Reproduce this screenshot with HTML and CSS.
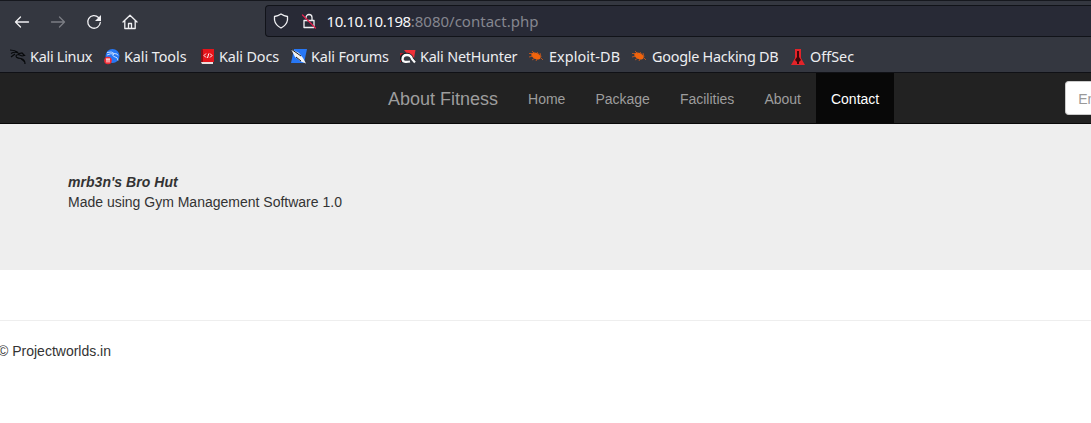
FILE: index.html
```html
<!DOCTYPE html>
<html lang="en">
<head>
<meta charset="utf-8">
<title>Contact</title>
<link rel="stylesheet" href="styles.css">
</head>
<body>
<header class="browser">
  <div class="toolbar">
    <div class="controls">
      <svg class="control" viewBox="0 0 16 16"><path d="M14.500 8H1.500M6.500 3 1.500 8l5 5"/></svg>
      <svg class="control control-off" viewBox="0 0 16 16"><path d="M1.500 8h13M9.500 3l5 5-5 5"/></svg>
      <svg class="control" viewBox="0 0 16 16"><path d="M12.500 3.500A6.300 6.300 0 1 0 14.300 8.500"/><path class="solid" d="M15 1v6H9z"/></svg>
      <svg class="control" viewBox="0 0 16 16"><path d="M1 8 8 1.300 15 8M2.800 6.500V14.500H13.200V6.500M6.500 14V9.500H9.500V14"/></svg>
    </div>
    <div class="address">
      <svg class="control" viewBox="0 0 16 16"><path d="M8 1Q11 3 14.500 3.500V7q-.8 5-6.500 8Q2.300 12 1.500 7V3.500Q5 3 8 1z"/></svg>
      <svg class="control" viewBox="0 0 16 16"><path d="M3 7.500h10v7H3zM5 5V4.500a3 3 0 0 1 6 0V7"/><path class="slash" d="M1.500 2 14.500 15"/></svg>
      <span class="url"><b>10.10.10.198</b>:8080/contact.php</span>
    </div>
  </div>
  <nav class="bookmarks">
    <a class="mark linux"><svg viewBox="0 0 16 16"><path d="M0 1Q5 1 8 3.500M1 4.500Q5 2 9 4.500L12 4l2.500 2.500L12 7 8.500 5.500Q5 6 6.500 8.200 8 9.500 11 9.500q4 1 4 5.500M1 8l4-3M11 10q2 1 3 2.500" fill="none" stroke="#07090b" stroke-width="1.200"/></svg><span>Kali Linux</span></a>
    <a class="mark tools"><svg viewBox="0 0 16 16"><circle cx="8.500" cy="7" r="7" fill="#2777f5"/><path d="M3 3.500Q8 2 10 4.500l3 .5 1 1.500M3 6q4-2 7-1-3 1 0 2.500 4 .5 4 4" fill="none" stroke="#c5dcff" stroke-width="1"/><circle cx="4" cy="11.500" r="3.800" fill="#f02b35"/><path d="M2 10h4M3 10v3.500M5 10v3.500" stroke="#fff"/></svg><span>Kali Tools</span></a>
    <a class="mark docs"><svg viewBox="0 0 16 16"><path d="M3 0h12v13H3z" fill="#e5141b"/><path d="M2 1l2-1v13H2z" fill="#8d0e14"/><path d="M2 13h12v2H3z" fill="#eadede"/><path d="M7 4.500 5 6.500l2 2M11 4.500l2 2-2 2M9.800 4.500l-1.300 4.500" fill="none" stroke="#fff"/></svg><span>Kali Docs</span></a>
    <a class="mark forums"><svg viewBox="0 0 16 16"><path d="M3 0h13l-3 14H0z" fill="#2777f5"/><path d="M0 0 8 4l4 5 3 5.500-5-2L4 8z" fill="#f4f4f4"/><path d="M0 0l10 7M5 8l5 4" stroke="#171b22"/></svg><span>Kali Forums</span></a>
    <a class="mark hunter"><svg viewBox="0 0 16 16"><path d="M4 1h11.500l-2 11z" fill="#f03038"/><path d="M0 4h4v9H0z" fill="#b91d2b"/><path d="M3 13Q-1 7 5 5.500q5-1 7 3.500l3 4.500" fill="none" stroke="#15191e" stroke-width="3"/><path d="M10 12.500Q3 14 2.500 10.500 2.500 6 7 6q4 0 5 4l3 3.500" fill="none" stroke="#fafafa" stroke-width="2.300"/></svg><span>Kali NetHunter</span></a>
    <a class="mark exploit"><svg viewBox="0 0 16 16"><ellipse cx="8" cy="7" rx="5" ry="3" transform="rotate(24 8 7)" fill="#f2640c"/><path d="M4 2l3 3M1 4.500h4M1 8l4-1M4 11l3-2M8 12l1-2M9 3l2 3M12 4l1 4M13 9l2 2" stroke="#d75b17" stroke-width=".8"/></svg><span>Exploit-DB</span></a>
    <a class="mark google"><svg viewBox="0 0 16 16"><ellipse cx="8" cy="7" rx="5" ry="3" transform="rotate(24 8 7)" fill="#f2640c"/><path d="M4 2l3 3M1 4.500h4M1 8l4-1M4 11l3-2M8 12l1-2M9 3l2 3M12 4l1 4M13 9l2 2" stroke="#d75b17" stroke-width=".8"/></svg><span>Google Hacking DB</span></a>
    <a class="mark offsec"><svg viewBox="0 0 16 16"><path d="M5 0h6v9l4 7H1l4-7z" fill="#e32329"/><path d="M7 2h2v6l2 3-2 2v2H7v-2l-2-2 2-3z" fill="#3d0709"/></svg><span>OffSec</span></a>
  </nav>
</header>
<nav class="site-nav">
  <a class="brand">About Fitness</a>
  <a>Home</a><a>Package</a><a>Facilities</a><a>About</a><a class="active">Contact</a>
  <div class="search">En</div>
</nav>
<main class="hero"><strong>mrb3n's Bro Hut</strong><span>Made using Gym Management Software 1.0</span></main>
<footer class="footer">© Projectworlds.in</footer>
</body>
</html>
```
FILE: styles.css
```css
* { box-sizing: border-box; }
body { margin: 0; overflow: hidden; background: #fff; color: #333; font: 14px/20px "Liberation Sans", Arial, sans-serif; }
svg { display: block; flex: none; width: 16px; height: 16px; }
.browser { height: 73px; background: #343740; border-top: 1px solid #16181e; border-bottom: 1px solid #101116; font-family: "Noto Sans", sans-serif; }
.toolbar { height: 41px; padding: 4px 0 4px 14px; display: flex; }
.controls { display: flex; gap: 20px; width: 251px; padding-top: 9px; }
.control { fill: none; stroke: #f0f0f3; stroke-width: 1.3; stroke-linejoin: round; stroke-linecap: round; }
.control-off { stroke: #7b7d84; }
.control .solid { fill: #f0f0f3; stroke: none; }
.control .slash { stroke: #e2204d; }
.address { flex: 1; height: 32px; border: 1px solid #111319; border-right: 0; border-radius: 4px 0 0 4px; background: #282a36; display: flex; align-items: center; gap: 12px; padding-left: 7px; }
.url { color: #85868f; font-size: 15px; margin-left: -2.500px; }
.url b { color: #f7f7fa; font-weight: 400; letter-spacing: -0.420px; }
.bookmarks { height: 30px; display: flex; align-items: center; padding-left: 10px; color: #edeef1; font-size: 14.400px; white-space: nowrap; }
.mark { display: flex; align-items: center; gap: 4px; flex: none; }
.linux { width: 94px; letter-spacing: -0.260px; }
.tools { width: 95px; letter-spacing: -0.070px; }
.docs { width: 92px; letter-spacing: -0.140px; }
.forums { width: 109px; letter-spacing: -0.150px; }
.hunter { width: 129px; letter-spacing: -0.200px; }
.exploit { width: 103px; letter-spacing: 0.080px; }
.google { width: 158px; letter-spacing: -0.250px; }
.exploit svg, .google svg { margin-left: -1px; margin-right: 1px; }
.site-nav { height: 51px; padding-left: 373px; display: flex; background: #222; border-bottom: 1px solid #080808; color: #9d9d9d; white-space: nowrap; }
.site-nav a { padding: 16px 15px 14px; }
.site-nav .brand { font-size: 18px; }
.site-nav .active { background: #080808; color: #fff; }
.search { flex: 1; min-width: 0; overflow: hidden; margin: 8px 0 0 171px; height: 34px; padding: 7px 0 5px 12px; border: 1px solid #ccc; border-right: 0; border-radius: 4px 0 0 4px; background: #fff; color: #999; }
.hero { height: 146px; padding: 48px 68px; display: flex; flex-direction: column; background: #eee; }
.hero strong { font-style: italic; letter-spacing: 0.040px; }
.footer { margin-top: 50px; border-top: 1px solid #eee; padding-top: 20px; text-indent: -2px; }
```
